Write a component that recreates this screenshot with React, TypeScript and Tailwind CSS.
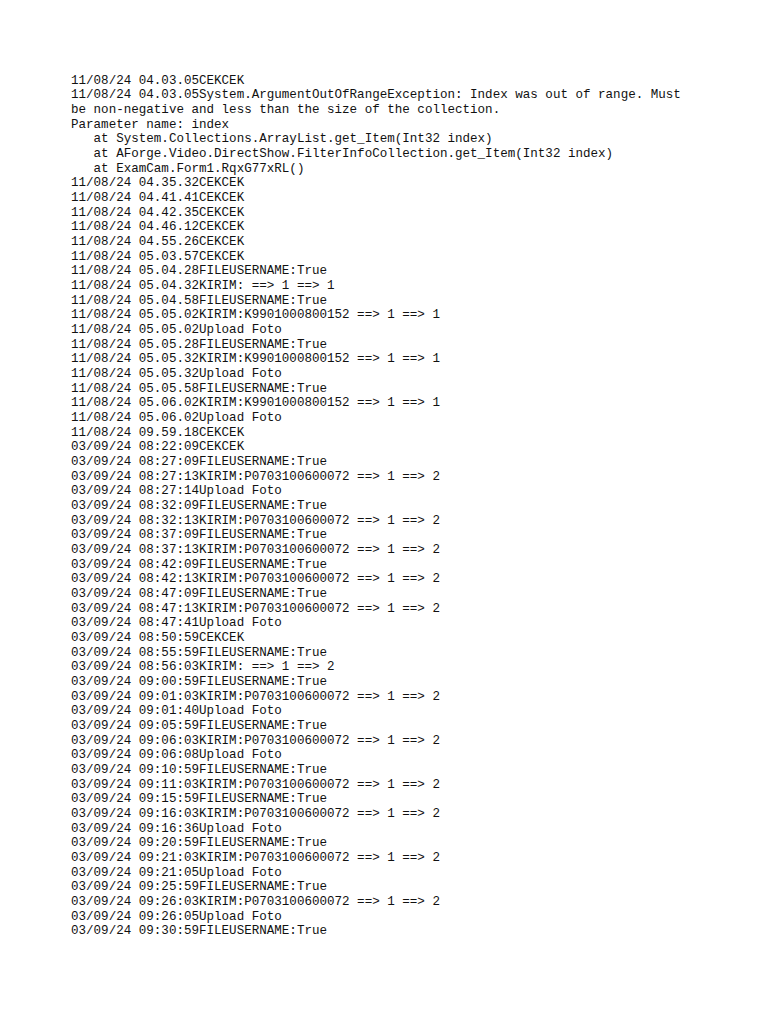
import React from "react";

const lines = [
  "11/08/24 04.03.05CEKCEK",
  "11/08/24 04.03.05System.ArgumentOutOfRangeException: Index was out of range. Must",
  "be non-negative and less than the size of the collection.",
  "Parameter name: index",
  "   at System.Collections.ArrayList.get_Item(Int32 index)",
  "   at AForge.Video.DirectShow.FilterInfoCollection.get_Item(Int32 index)",
  "   at ExamCam.Form1.RqxG77xRL()",
  "11/08/24 04.35.32CEKCEK",
  "11/08/24 04.41.41CEKCEK",
  "11/08/24 04.42.35CEKCEK",
  "11/08/24 04.46.12CEKCEK",
  "11/08/24 04.55.26CEKCEK",
  "11/08/24 05.03.57CEKCEK",
  "11/08/24 05.04.28FILEUSERNAME:True",
  "11/08/24 05.04.32KIRIM: ==> 1 ==> 1",
  "11/08/24 05.04.58FILEUSERNAME:True",
  "11/08/24 05.05.02KIRIM:K9901000800152 ==> 1 ==> 1",
  "11/08/24 05.05.02Upload Foto",
  "11/08/24 05.05.28FILEUSERNAME:True",
  "11/08/24 05.05.32KIRIM:K9901000800152 ==> 1 ==> 1",
  "11/08/24 05.05.32Upload Foto",
  "11/08/24 05.05.58FILEUSERNAME:True",
  "11/08/24 05.06.02KIRIM:K9901000800152 ==> 1 ==> 1",
  "11/08/24 05.06.02Upload Foto",
  "11/08/24 09.59.18CEKCEK",
  "03/09/24 08:22:09CEKCEK",
  "03/09/24 08:27:09FILEUSERNAME:True",
  "03/09/24 08:27:13KIRIM:P0703100600072 ==> 1 ==> 2",
  "03/09/24 08:27:14Upload Foto",
  "03/09/24 08:32:09FILEUSERNAME:True",
  "03/09/24 08:32:13KIRIM:P0703100600072 ==> 1 ==> 2",
  "03/09/24 08:37:09FILEUSERNAME:True",
  "03/09/24 08:37:13KIRIM:P0703100600072 ==> 1 ==> 2",
  "03/09/24 08:42:09FILEUSERNAME:True",
  "03/09/24 08:42:13KIRIM:P0703100600072 ==> 1 ==> 2",
  "03/09/24 08:47:09FILEUSERNAME:True",
  "03/09/24 08:47:13KIRIM:P0703100600072 ==> 1 ==> 2",
  "03/09/24 08:47:41Upload Foto",
  "03/09/24 08:50:59CEKCEK",
  "03/09/24 08:55:59FILEUSERNAME:True",
  "03/09/24 08:56:03KIRIM: ==> 1 ==> 2",
  "03/09/24 09:00:59FILEUSERNAME:True",
  "03/09/24 09:01:03KIRIM:P0703100600072 ==> 1 ==> 2",
  "03/09/24 09:01:40Upload Foto",
  "03/09/24 09:05:59FILEUSERNAME:True",
  "03/09/24 09:06:03KIRIM:P0703100600072 ==> 1 ==> 2",
  "03/09/24 09:06:08Upload Foto",
  "03/09/24 09:10:59FILEUSERNAME:True",
  "03/09/24 09:11:03KIRIM:P0703100600072 ==> 1 ==> 2",
  "03/09/24 09:15:59FILEUSERNAME:True",
  "03/09/24 09:16:03KIRIM:P0703100600072 ==> 1 ==> 2",
  "03/09/24 09:16:36Upload Foto",
  "03/09/24 09:20:59FILEUSERNAME:True",
  "03/09/24 09:21:03KIRIM:P0703100600072 ==> 1 ==> 2",
  "03/09/24 09:21:05Upload Foto",
  "03/09/24 09:25:59FILEUSERNAME:True",
  "03/09/24 09:26:03KIRIM:P0703100600072 ==> 1 ==> 2",
  "03/09/24 09:26:05Upload Foto",
  "03/09/24 09:30:59FILEUSERNAME:True",
];

export default function App() {
  return (
    <div className="w-[768px] h-[1024px] bg-white overflow-hidden">
      <div className="pt-[73.5px] pl-[71px] flex flex-col text-[12.56px] leading-[14.665px] text-[#111] font-['Liberation_Mono',monospace]">
        {lines.map((l, i) => (
          <div key={i} className="whitespace-pre">
            {l}
          </div>
        ))}
      </div>
    </div>
  );
}
